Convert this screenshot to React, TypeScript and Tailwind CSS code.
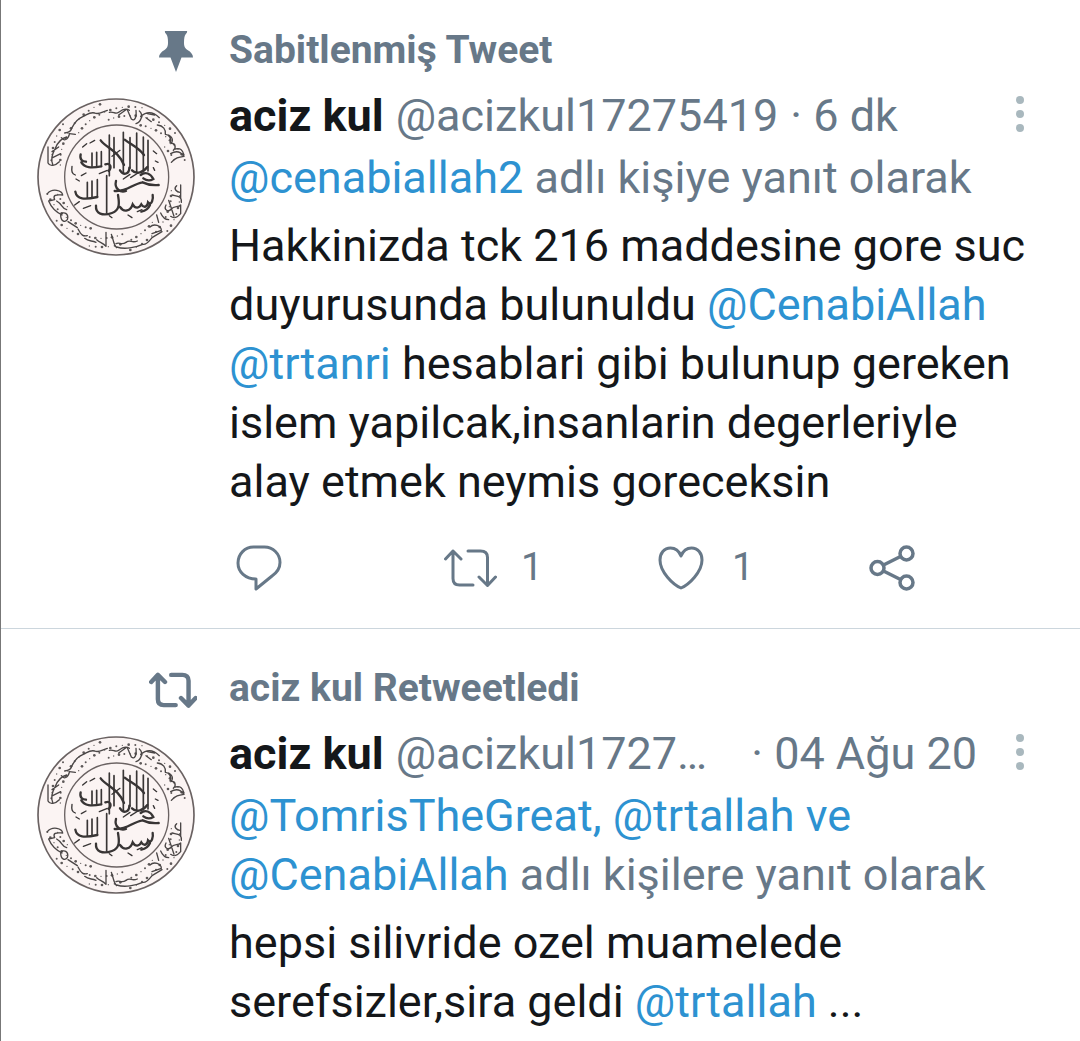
import type { ReactNode } from "react"

type IconProps = { className?: string }

const PinIcon = ({ className }: IconProps) => (
  <svg viewBox="0 0 34 42" className={className} fill="currentColor" aria-hidden="true">
    <path d="M6 0h22c.6 1.200-.5 2.200-1.500 3.500-1 1.500-1.500 4-1.500 8 0 4 .8 5.500 3.500 7.500 3.500 2 5.500 4.500 5.500 7.500H22.500L17 41l-5.500-14.500H0c0-3 2-5.500 5.500-7.500C8.200 17 9 15.500 9 11.500c0-4-.5-6.500-1.500-8C6.500 2.200 5.400 1.200 6 0z" />
  </svg>
)

const RetweetIcon = ({ className }: IconProps) => (
  <svg
    viewBox="0 0 54 40"
    className={className}
    fill="none"
    stroke="currentColor"
    strokeLinecap="round"
    strokeLinejoin="round"
    aria-hidden="true"
  >
    <path d="M2.500 11 10 3l8 8M10 3v27.500c0 4 2 6.500 6.500 6.500H30M25 3h12.500c4.500 0 7 2.500 7 6.500V37M36 29l8.500 8.500 8-8.500" />
  </svg>
)

const ReplyIcon = ({ className }: IconProps) => (
  <svg
    viewBox="0 0 46 46"
    className={className}
    fill="none"
    stroke="currentColor"
    strokeWidth="3"
    strokeLinejoin="round"
    aria-hidden="true"
  >
    <path d="M17.500 2h11C37 2 44 9 44 17.500c0 6-3 10-8 13.500L20 44V34C9.500 34 2 27 2 18 2 9 9 2 17.500 2z" />
  </svg>
)

const HeartIcon = ({ className }: IconProps) => (
  <svg
    viewBox="0 0 46 44"
    className={className}
    fill="none"
    stroke="currentColor"
    strokeWidth="3"
    strokeLinejoin="round"
    aria-hidden="true"
  >
    <path d="M23 10C21 5 17.500 2 12.500 2 6 2 2 7.500 2 14c0 12 13 24.500 21 28 8-3.500 21-16 21-28C44 7.500 40 2 33.500 2 28.500 2 25 5 23 10z" />
  </svg>
)

const ShareIcon = ({ className }: IconProps) => (
  <svg
    viewBox="0 0 46 46"
    className={className}
    fill="none"
    stroke="currentColor"
    strokeWidth="3.500"
    aria-hidden="true"
  >
    <circle cx="8.500" cy="23" r="6.500" />
    <circle cx="37.500" cy="8.500" r="6.500" />
    <circle cx="37.500" cy="37.500" r="6.500" />
    <path d="m14.500 20 17-8.500M14.500 26l17 8.500" />
  </svg>
)

const MoreIcon = ({ className }: IconProps) => (
  <svg viewBox="0 0 8 36" className={className} fill="currentColor" aria-hidden="true">
    <circle cx="4" cy="4" r="4" />
    <circle cx="4" cy="18" r="4" />
    <circle cx="4" cy="32" r="4" />
  </svg>
)

// [start angle, end angle] of the decorated parts of the ring, in degrees
const RING_ARCS = [
  [192, 346],
  [14, 166],
]

const RING_DOTS = RING_ARCS.flatMap(([from, to]) =>
  Array.from({ length: 62 }, (_, i) => {
    const angle = ((from + ((to - from) * i) / 61) * Math.PI) / 180
    const radius = 171 + ((i * 29) % 54)
    return {
      x: Math.round(350 + radius * Math.cos(angle)),
      y: Math.round(290 + radius * Math.sin(angle)),
      r: 2 + (i % 3),
    }
  }),
)

const Avatar = () => (
  <svg viewBox="113 53 474 474" className="size-[158px]" role="img" aria-label="aciz kul">
    <circle cx="350" cy="290" r="234" fill="#fbf4f3" stroke="#6a6262" strokeWidth="5" />
    <circle cx="352" cy="290" r="156" fill="#fbf4f3" stroke="#6a6262" strokeWidth="4" />
    <g fill="#5d5858">
      {RING_DOTS.map((dot) => (
        <circle key={`${dot.x}-${dot.y}`} cx={dot.x} cy={dot.y} r={dot.r} />
      ))}
    </g>
    <g fill="none" stroke="#4a4646" strokeWidth="4" strokeLinecap="round" strokeLinejoin="round">
      <path d="M146 200v48c6 12 22 8 34-4M160 252c-8-18 0-34 8-48 8-20 18-30 34-34M158 214l20-14M160 232l24-12M186 172c8 12 20 6 24-10" />
      <path d="M196 158c12-2 18-4 22-16 8-16 18-28 34-34 10-4 20-14 34-10 14 6 22-4 38-8M210 160l18 2M330 96c12-4 18 8 28 0s22-14 32-6M358 104l22-16" />
      <path d="M384 88l12 28c10 8 16-4 14-26M420 92c14 12 4 34-10 38M424 108c16-14 36-16 56 4M444 100l22 4M440 112l16 12" />
      <path d="M474 134c18 2 26 14 24 28 10 0 20 12 14 26 16 0 20 12 10 22M508 164c16 10 12 22 6 26M514 220c16-10 30-6 40 8-16 2-26 4-38 18M528 206c14-4 22 2 26 18" />
      <path d="M144 340c16-18 44-10 46 4-14 0-32-4-24 14l-18 4c8 20 24 34 40 42M172 362c18 10 14 22 30 26M184 404c8-14 26-4 20 14-8 10-20 4-20-14zM206 424l28 18" />
      <path d="M236 446c10 20 16 22 28 20M256 474c12 10 20 6 34 12M292 478c10 10 18 8 28 20M320 456v42M336 462c8 20 6 32 16 40" />
      <path d="M352 500c24 8 56 2 78-8 12 2 20-10 28-20l30-18M452 440c12-12 34-4 34 10l-28 10M350 490c10-6 16 6 30-4s16 4 34-4" />
      <path d="M544 314v38M532 316c-12 10 2 20 10 20M518 344c16 4 30 2 28 22M500 374c-8 16 8 22 16 12s20-4 28-12v26c-14 16-22 14-30 8M484 398c6 14 14 20 24 20M478 426l-6-22M508 360l16 48" />
    </g>
    <g fill="none" stroke="#383535" strokeLinecap="round">
      <path
        strokeWidth="5"
        d="M330 164v122M344 172v90M372 156v120M392 172v92M412 158v118M432 170v104M446 180v92M322 286v112M306 214v44M292 216v40M278 218v40M294 298v52M278 302v50M264 306v46"
      />
      <path
        strokeWidth="7"
        d="M304 180c18 24 52 30 70 74M376 178c20 16 40 22 58 46M244 222c-4 16 6 22 16 22M246 246c10 16 28 18 60 12M228 334c4 24 28 24 66 16M318 252c16-6 20 10 10 20M362 270c12 18 28 10 28-8M398 270c14 14 34 6 46-10"
      />
      <path
        strokeWidth="7"
        d="M346 332c36 4 54-22 84-26M424 284c14-12 30-4 38 12-10 6-22 4-30-2M430 306c16 8 28 10 48 8M350 302c-6 24 14 36 30 30M290 376c-2 24 20 32 48 22s20-38 18-54M362 380c12 18 32 12 38-8 8 14 20 12 26 0 8 12 18 8 20-6 12 12 16-12 14-22M452 374c-6 14-16 18-26 20"
      />
      <path
        strokeWidth="4"
        d="M250 200l12-10M272 188l14-8M218 258c-2 16 0 22 10 26M230 296l10 6M246 286l14-8M252 384l22-8M372 296l20-14M394 292l22-14M330 406l8 6M386 404l12 8M414 394l14-6M462 212l10 8M468 242l8 4M462 262l4 8M226 374l14-10M300 280l24-10M338 228l24-18"
      />
    </g>
  </svg>
)

const Mention = ({ children }: { children: ReactNode }) => (
  <a href="#" className="text-[#2d92d1]">
    {children}
  </a>
)

type TweetProps = {
  contextIcon: ReactNode
  context: string
  handle: string
  time: string
  truncated?: boolean
  replyingTo: ReactNode
  actions?: ReactNode
  children: ReactNode
}

const Tweet = ({ contextIcon, context, handle, time, truncated, replyingTo, actions, children }: TweetProps) => (
  <article className="mb-[9px] grid grid-cols-[160px_1fr] gap-x-8 border-b border-[#ccd6dd] pt-6 pr-10 pl-9 last:mb-0 last:border-b-0">
    <div className="flex items-center justify-end pt-1 text-[#677888]">{contextIcon}</div>
    <p className="text-[39px] leading-[52px] font-bold text-[#677888]">{context}</p>
    <div className="pt-[22px]">
      <Avatar />
    </div>
    <div className="min-w-0 pt-2.5 text-[45px] leading-[59px] text-[#14171a]">
      <header className="flex items-center whitespace-nowrap text-[#677888]">
        <h2 className="font-bold text-[#14171a]">aciz kul</h2>
        <span className="ml-3">{handle}</span>
        <span className={truncated ? "ml-11" : "ml-3"}>· {time}</span>
        <button type="button" aria-label="Diğer" className="ml-auto px-4 pb-1 text-[#a9b8be]">
          <MoreIcon className="h-9 w-2" />
        </button>
      </header>
      <p className="pt-[3px] text-[#677888]">{replyingTo}</p>
      <p className="pt-[9px]">{children}</p>
      {actions}
    </div>
  </article>
)

export default function App() {
  return (
    <main className="min-h-screen border-l border-[#777] bg-white font-[Roboto,sans-serif]">
      <Tweet
        contextIcon={<PinIcon className="mr-1 h-[42px] w-[34px]" />}
        context="Sabitlenmiş Tweet"
        handle="@acizkul17275419"
        time="6 dk"
        replyingTo={
          <>
            <Mention>@cenabiallah2</Mention> adlı kişiye yanıt olarak
          </>
        }
        actions={
          <div className="-mr-10 grid grid-cols-4 pt-[27px] pb-[31px] pl-[7px] text-[39px] text-[#677888]">
            <button type="button" aria-label="Yanıtla" className="flex items-center">
              <ReplyIcon className="size-[46px]" />
            </button>
            <button type="button" aria-label="Retweetle" className="-ml-1 flex items-center gap-6">
              <RetweetIcon className="h-10 w-[54px] stroke-[3px]" />1
            </button>
            <button type="button" aria-label="Beğen" className="flex items-center gap-7">
              <HeartIcon className="h-11 w-[46px]" />1
            </button>
            <button type="button" aria-label="Paylaş" className="flex items-center">
              <ShareIcon className="size-[46px]" />
            </button>
          </div>
        }
      >
        Hakkinizda tck 216 maddesine gore suc duyurusunda bulunuldu <Mention>@CenabiAllah</Mention>{" "}
        <Mention>@trtanri</Mention> hesablari gibi bulunup gereken islem yapilcak,insanlarin degerleriyle alay
        etmek neymis goreceksin
      </Tweet>
      <Tweet
        contextIcon={<RetweetIcon className="h-9 w-12 stroke-[5px]" />}
        context="aciz kul Retweetledi"
        handle="@acizkul1727…"
        time="04 Ağu 20"
        truncated
        replyingTo={
          <>
            <Mention>@TomrisTheGreat, @trtallah ve @CenabiAllah</Mention> adlı kişilere yanıt olarak
          </>
        }
      >
        hepsi silivride ozel muamelede serefsizler,sira geldi <Mention>@trtallah</Mention> ...
      </Tweet>
    </main>
  )
}
